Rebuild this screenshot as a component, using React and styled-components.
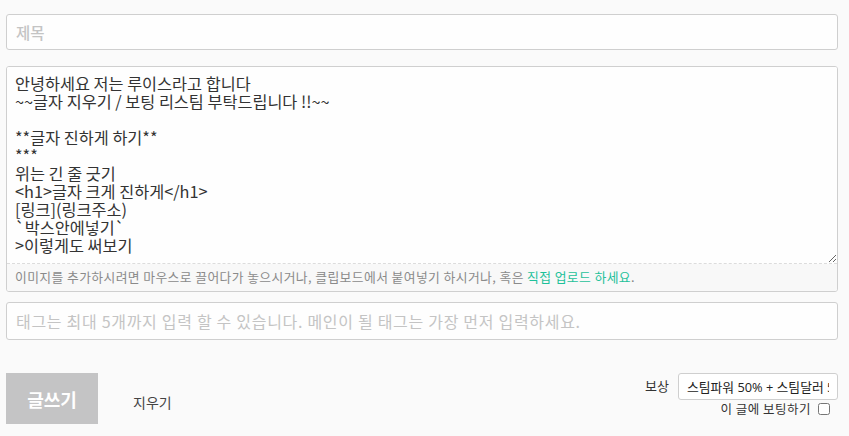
import React from "react";
import styled, { createGlobalStyle } from "styled-components";

const Global = createGlobalStyle`
  html, body { margin: 0; padding: 0; background: #fafafa; }
  body { font-family: "Noto Sans CJK KR", "Noto Sans", sans-serif; color: #333; }
  * { box-sizing: border-box; }
`;

const Page = styled.div`
  padding: 14px 11px 12px 6px;
  display: flex;
  flex-direction: column;
`;

const TextInput = styled.input`
  display: block;
  width: 100%;
  height: ${(p) => p.$h}px;
  margin-bottom: ${(p) => p.$mb}px;
  border: 1px solid #cfcfcf;
  border-radius: 3px;
  background: #fefefe;
  padding: 0 9px;
  font-family: "Noto Sans CJK KR", sans-serif;
  font-size: ${(p) => p.$fs}px;
  font-weight: ${(p) => p.$fw || 400};
  letter-spacing: ${(p) => p.$ls || 0}px;
  color: #333;
  outline: none;
  &::placeholder { color: #c4c4c4; }
`;

const EditorBox = styled.div`
  border: 1px solid #cfcfcf;
  border-radius: 3px;
  background: #fefefe;
  margin-bottom: 10px;
  overflow: hidden;
`;

const Body = styled.textarea`
  display: block;
  width: 100%;
  height: 197px;
  border: none;
  border-bottom: 1px dashed #dcdcdc;
  resize: vertical;
  padding: 7px 8px 0;
  background: #fefefe;
  font-family: "Noto Sans CJK KR", sans-serif;
  font-size: 16.3px;
  line-height: 18px;
  color: #333;
  outline: none;
`;

const Hint = styled.div`
  height: 27px;
  background: #f8f8f8;
  padding: 0 8px 2px;
  display: flex;
  align-items: center;
  font-size: 12.8px;
  letter-spacing: 0.4px;
  color: #8a8a8a;
`;

const HintLink = styled.span`
  color: #1ec19a;
`;

const Footer = styled.div`
  margin-top: 33px;
  display: flex;
  justify-content: space-between;
  align-items: flex-start;
`;

const Left = styled.div`
  display: flex;
  align-items: center;
`;

const Submit = styled.button`
  width: 92px;
  height: 51px;
  border: none;
  background: #c4c4c5;
  color: #fff;
  font-family: "Noto Sans CJK KR", sans-serif;
  font-weight: 700;
  font-size: 18px;
  padding: 0;
`;

const Clear = styled.button`
  border: none;
  background: transparent;
  margin-left: 35px;
  margin-top: 6px;
  padding: 0;
  font-family: "Noto Sans CJK KR", sans-serif;
  font-size: 14px;
  color: #444;
`;

const Right = styled.div`
  display: flex;
  flex-direction: column;
  align-items: flex-end;
`;

const RewardRow = styled.div`
  display: flex;
  align-items: center;
  gap: 9px;
`;

const Label = styled.span`
  font-size: 13px;
  color: #333;
  margin-top: -2px;
`;

const Select = styled.select`
  appearance: none;
  width: 160px;
  height: 27px;
  border: 1px solid #cfcfcf;
  border-radius: 3px;
  background: #fff;
  padding: 0 8px;
  font-family: "Open Sans", "Noto Sans CJK KR", sans-serif;
  font-size: 12.8px;
  color: #222;
  outline: none;
`;

const VoteRow = styled.label`
  display: flex;
  align-items: center;
  gap: 7px;
  margin-top: 1px;
  margin-right: 8px;
  font-size: 12.5px;
  line-height: 15px;
  letter-spacing: 0.5px;
  color: #333;
`;

const Check = styled.input`
  margin: 0;
  width: 12px;
  height: 12px;
`;

const content = `안녕하세요 저는 루이스라고 합니다
~~글자 지우기 / 보팅 리스팀 부탁드립니다 !!~~

**글자 진하게 하기**
***
위는 긴 줄 긋기
<h1>글자 크게 진하게</h1>
[링크](링크주소)
\`박스안에넣기\`
>이렇게도 써보기`;

export default function App() {
  return (
    <>
      <Global />
      <Page>
        <TextInput $h={36} $mb={16} $fs={15.5} $fw={500} placeholder="제목" />
        <EditorBox>
          <Body defaultValue={content} spellCheck={false} />
          <Hint>
            이미지를 추가하시려면 마우스로 끌어다가 놓으시거나, 클립보드에서 붙여넣기 하시거나, 혹은&nbsp;
            <HintLink>직접 업로드 하세요</HintLink>.
          </Hint>
        </EditorBox>
        <TextInput
          $h={38}
          $mb={0}
          $fs={16}
          $ls={0.7}
          placeholder="태그는 최대 5개까지 입력 할 수 있습니다. 메인이 될 태그는 가장 먼저 입력하세요."
        />
        <Footer>
          <Left>
            <Submit>글쓰기</Submit>
            <Clear>지우기</Clear>
          </Left>
          <Right>
            <RewardRow>
              <Label>보상</Label>
              <Select defaultValue="50">
                <option value="50">스팀파워 50% + 스팀달러 50%</option>
                <option value="100">스팀파워 100%</option>
              </Select>
            </RewardRow>
            <VoteRow>
              이 글에 보팅하기
              <Check type="checkbox" />
            </VoteRow>
          </Right>
        </Footer>
      </Page>
    </>
  );
}
